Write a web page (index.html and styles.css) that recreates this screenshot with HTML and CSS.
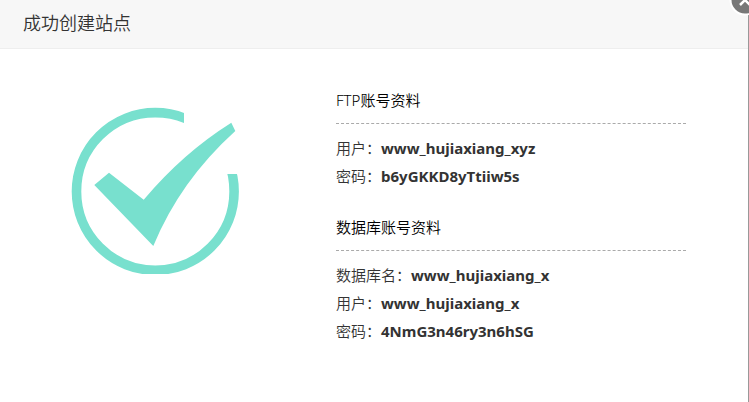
FILE: index.html
```html
<!DOCTYPE html>
<html lang="zh-CN">
<head>
<meta charset="utf-8">
<title>成功创建站点</title>
<link rel="stylesheet" href="styles.css">
</head>
<body>
<main class="dialog">
  <header class="dialog-header">
    <h1 class="dialog-title">成功创建站点</h1>
  </header>
  <button class="close" type="button" aria-label="关闭">
    <svg viewBox="0 0 32 32" aria-hidden="true">
      <circle cx="16" cy="16" r="14.5" fill="#787878" stroke="#fff" stroke-width="2"/>
      <path d="M11 11l10 10M21 11L11 21" stroke="#fff" stroke-width="2.5"/>
    </svg>
  </button>
  <div class="dialog-body">
    <div class="status">
      <svg class="success-icon" viewBox="0 0 169 167" aria-hidden="true">
        <clipPath id="ring-gap"><path d="M0 0H113V67H169V167H0Z"/></clipPath>
        <circle cx="84.3" cy="84.4" r="78.8" fill="none" stroke="#78e0ce" stroke-width="9.6" clip-path="url(#ring-gap)"/>
        <path d="M23.3 78L38 65.7L72.7 92.7Q112 46 160.3 15.7L164.3 24Q109 74 82.3 139Z" fill="#78e0ce"/>
      </svg>
    </div>
    <div class="accounts">
      <section class="account">
        <h2 class="account-title">FTP账号资料</h2>
        <p class="row">用户：<strong>www_hujiaxiang_xyz</strong></p>
        <p class="row">密码：<strong>b6yGKKD8yTtiiw5s</strong></p>
      </section>
      <section class="account">
        <h2 class="account-title">数据库账号资料</h2>
        <p class="row">数据库名：<strong>www_hujiaxiang_x</strong></p>
        <p class="row">用户：<strong>www_hujiaxiang_x</strong></p>
        <p class="row">密码：<strong>4NmG3n46ry3n6hSG</strong></p>
      </section>
    </div>
  </div>
</main>
</body>
</html>
```
FILE: styles.css
```css
* {
  box-sizing: border-box;
}

body {
  margin: 0;
  background: #999;
  color: #333;
  font: 15px/28px "Noto Sans", "Noto Sans CJK SC", sans-serif;
  overflow: hidden;
}

h1, h2, p {
  margin: 0;
  font-weight: 350;
}

.dialog {
  position: relative;
  min-height: 100vh;
  margin-right: 1px;
  background: #fff;
}

.dialog-header {
  padding: 0 23px 2px;
  background: #f7f7f7;
  border-bottom: 1px solid #eee;
}

.dialog-title {
  font-size: 18px;
  line-height: 46px;
}

.close {
  position: absolute;
  top: -16px;
  right: -13px;
  width: 32px;
  height: 32px;
  padding: 0;
  border: 0;
  background: none;
}

.close svg {
  display: block;
}

.dialog-body {
  display: flex;
  gap: 96px;
  padding: 37px 62px 48px 71px;
}

.status {
  flex: none;
  padding-top: 21px;
}

.success-icon {
  display: block;
  width: 169px;
  height: 167px;
}

.accounts {
  flex: 1;
}

.account + .account {
  margin-top: 23px;
}

.account-title {
  margin-bottom: 10px;
  padding-bottom: 9px;
  border-bottom: 1px dashed #aaa;
  color: #000;
  font-size: 15px;
}

.row strong {
  font-weight: 700;
}
```
